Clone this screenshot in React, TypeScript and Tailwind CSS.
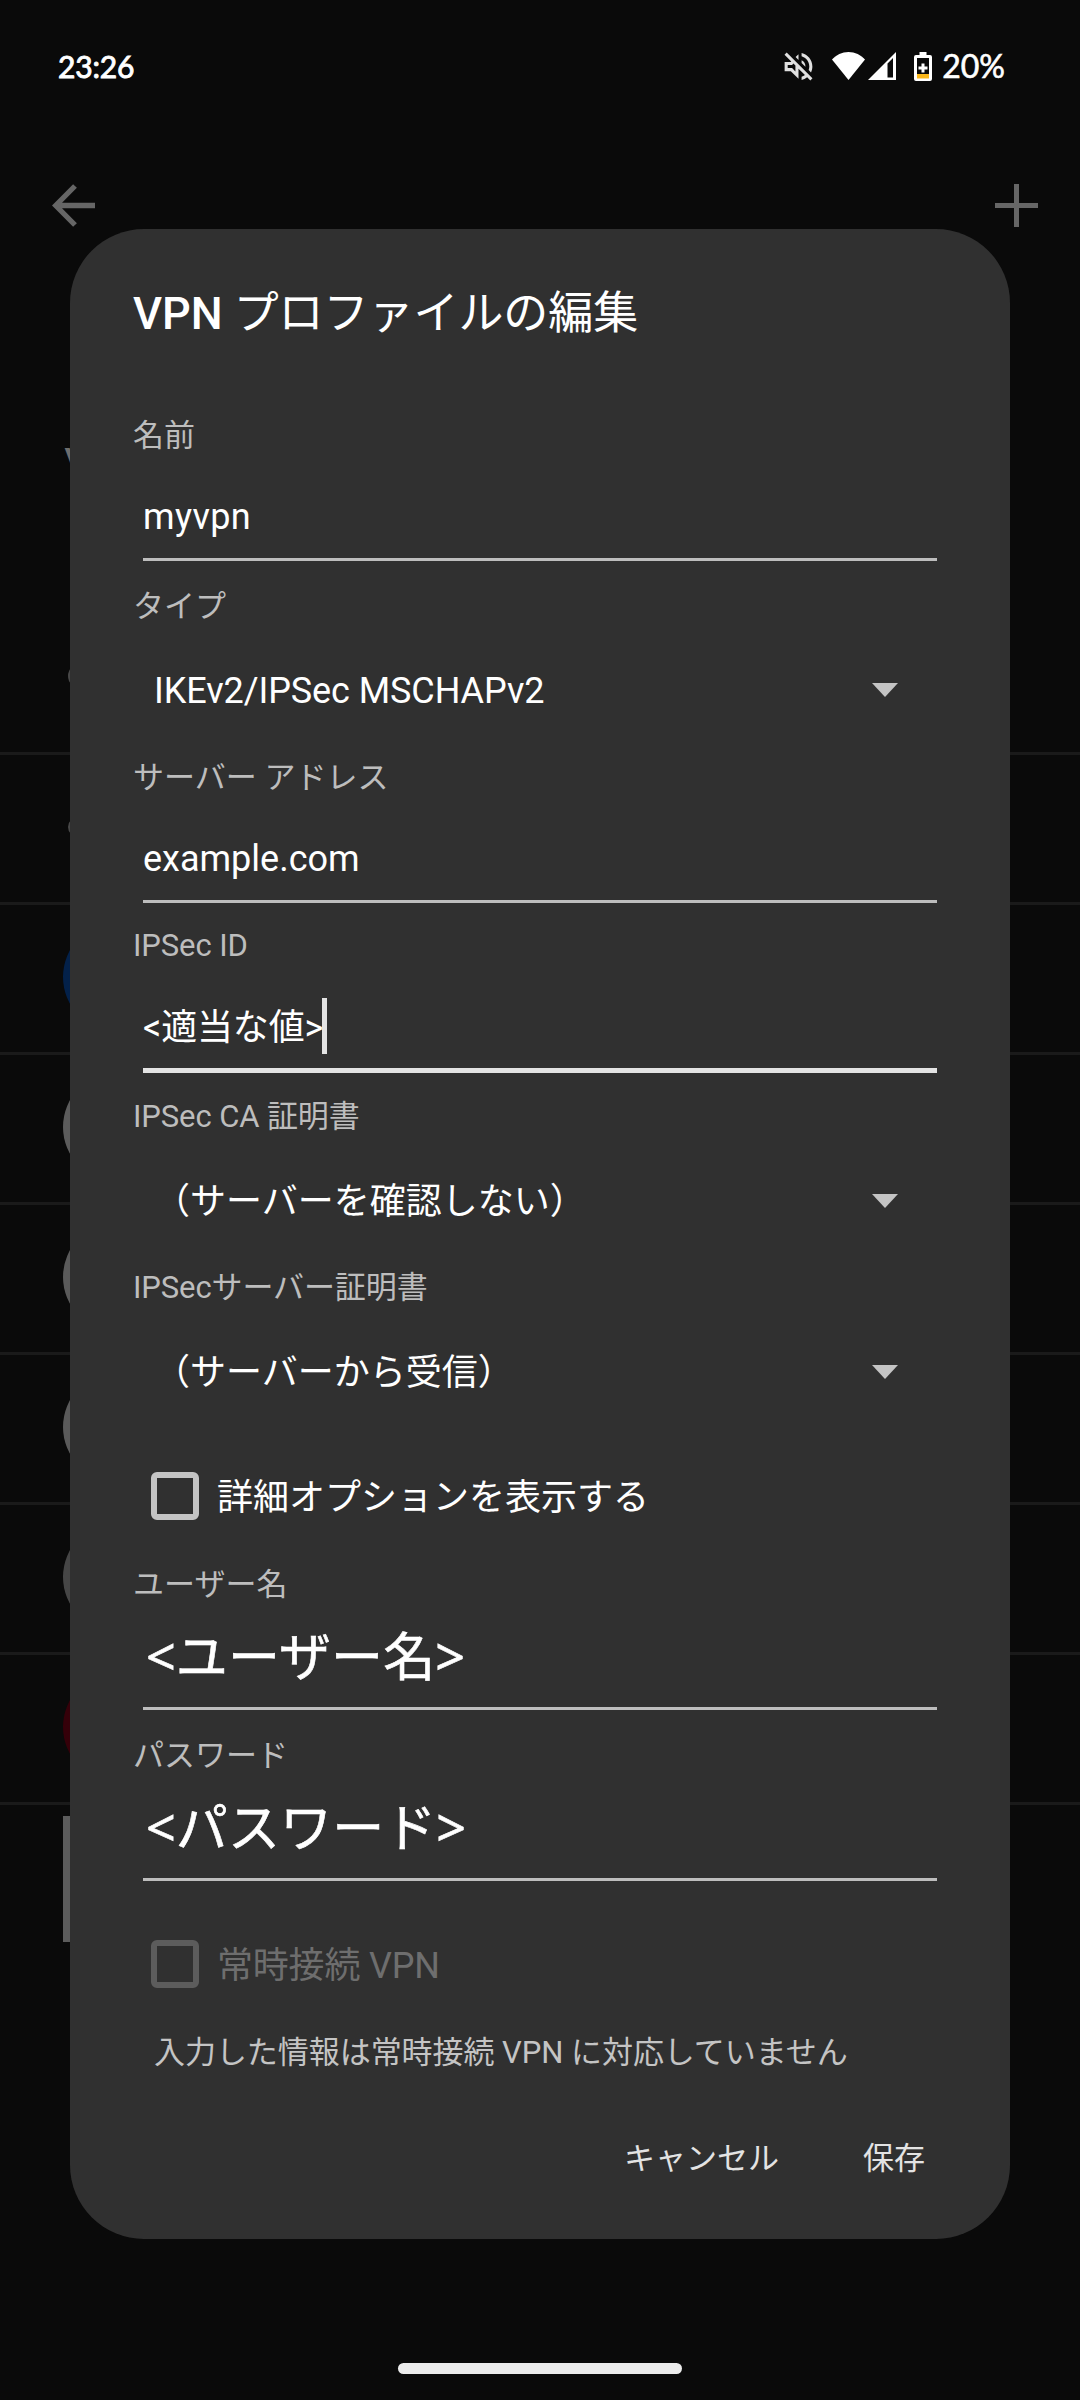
import React from 'react';
import { MdOutlineVolumeOff } from 'react-icons/md';

function StatusBar() {
  return (
    <div className="flex h-[132px] items-center justify-between pl-[58px] pr-[75px] text-white">
      <span className="font-['Lato','Roboto',sans-serif] text-[30px] leading-[40px] tracking-[-0.2px] [-webkit-text-stroke:0.9px]">23:26</span>
      <div className="flex items-center">
        <MdOutlineVolumeOff className="mr-[15px] size-[37px] text-[#e0e0e0]" />
        <svg className="mr-[3px] h-[28px] w-[33px]" viewBox="0 0 33 28">
          <path d="M16.5 28 0 7.5C4 3 10 0 16.500 0S29 3 33 7.500Z" fill="#fff" />
        </svg>
        <svg className="mr-[18px] h-[28px] w-[28px]" viewBox="0 0 28 28">
          <path fillRule="evenodd" d="M0 28 28 0V28ZM19.500 11.500V25.500H25V6Z" fill="#fff" />
        </svg>
        <svg className="mr-[10px] h-[29px] w-[18px]" viewBox="0 0 18 29">
          <path d="M5.500 0h7v3H16q2 0 2 2v22q0 2-2 2H2q-2 0-2-2V5q0-2 2-2h3.500Z" fill="#fff" />
          <path d="M3 6h12v20H3Z" fill="#0a0a0a" />
          <path d="M3 22h12v4.500H3Z" fill="#fbb71a" />
          <path d="M7.500 11.500h3v3h3v3h-3v3h-3v-3h-3v-3h3Z" fill="#fff" />
        </svg>
        <span className="font-['Lato','Roboto',sans-serif] text-[32px] leading-[40px] [-webkit-text-stroke:0.6px]">20%</span>
      </div>
    </div>
  );
}

function AppBar() {
  return (
    <div className="flex h-[145px] items-center justify-between pt-px pl-[52px] pr-[42px] text-[#666]">
      <svg className="size-[43px]" viewBox="0 0 43 43" fill="none" stroke="currentColor" strokeWidth="5.300">
        <path d="M43 21.500H4M23 2 3.700 21.500 23 41" />
      </svg>
      <svg className="size-[43px]" viewBox="0 0 43 43" fill="none" stroke="currentColor" strokeWidth="5">
        <path d="M21.500 0v43M0 21.500h43" />
      </svg>
    </div>
  );
}

const rows = [
  'bg-[#03214a]',
  'bg-[#5c5c5c]',
  'bg-[#5a5a5a]',
  'bg-[#5a5a5a]',
  'bg-[#464646]',
  'bg-[#350009]',
];

function SettingsList() {
  return (
    <div className="flex flex-col">
      <div className="flex h-[478px] flex-col border-b-[3px] border-[#1a1a1a] pt-[159px] pl-[64px]">
        <span className="h-[60px] font-['Roboto',sans-serif] text-[48px] leading-[60px] text-[#6e6e6e]">V</span>
        <span className="mt-[168px] ml-[4px] size-[24px] rounded-full border-[3px] border-[#484848]" />
      </div>
      <div className="flex h-[150px] items-center border-b-[3px] border-[#1a1a1a] pb-[3px] pl-[68px]">
        <span className="size-[20px] rounded-full border-[3px] border-[#484848]" />
      </div>
      {rows.map((color, i) => (
        <div key={i} className="flex h-[150px] items-center border-b-[3px] border-[#1a1a1a] pb-[3px] pl-[63px]">
          <span className={`size-[110px] rounded-full ${color}`} />
        </div>
      ))}
      <div className="pt-[11px] pl-[63px]">
        <div className="size-[126px] bg-[#5c5c5c]" />
      </div>
    </div>
  );
}

function Label({ children, className = '' }: { children: React.ReactNode; className?: string }) {
  return <div className={`ml-[63px] h-[40px] text-[31px] leading-[40px] whitespace-pre text-[#bdbdbd] ${className}`}>{children}</div>;
}

function Field({ children, className = '' }: { children: React.ReactNode; className?: string }) {
  return (
    <div className={`mx-[73px] flex items-start border-b-[3px] border-[#bdbdbd] text-[36px] leading-[48px] text-white ${className}`}>
      {children}
    </div>
  );
}

function Spinner({ children, className = '' }: { children: React.ReactNode; className?: string }) {
  return (
    <div className={`flex h-[131px] items-center justify-between pr-[112px] pb-[4px] pl-[84px] text-[36px] leading-[48px] text-white ${className}`}>
      <span>{children}</span>
      <svg className="mb-[2px] h-[14px] w-[26px]" viewBox="0 0 26 14">
        <path d="M0 0h26L13 14Z" fill="#c4c4c4" />
      </svg>
    </div>
  );
}

function Check({ children, disabled = false, className = '' }: { children: React.ReactNode; disabled?: boolean; className?: string }) {
  return (
    <div className={`ml-[81px] flex h-[48px] items-center gap-[18px] text-[36px] leading-[48px] ${className}`}>
      <span className={`size-[48px] rounded-[6px] border-[6px] ${disabled ? 'border-[#5c5c5c]' : 'border-[#c4c4c4]'}`} />
      <span className={disabled ? 'pt-[3px] tracking-[-0.2px] text-[#6e6e6e]' : 'pt-[3px] text-white'}>{children}</span>
    </div>
  );
}

function Placeholder({ children }: { children: string }) {
  return (
    <span className="ml-[3px] font-['Noto_Sans','Noto_Sans_CJK_JP',sans-serif] text-[52px] leading-[60px] tracking-[0.1px] [-webkit-text-stroke:0.6px]">
      {children}
    </span>
  );
}

function VpnDialog() {
  return (
    <div className="absolute top-[229px] left-[70px] flex h-[2010px] w-[940px] flex-col rounded-[74px] bg-[#303030] pt-[55px] font-['Roboto','Noto_Sans_CJK_JP',sans-serif]">
      <h1 className="ml-[63px] h-[60px] text-[45px] leading-[60px] tracking-[-0.05px] text-white">
        <span className="font-medium">VPN</span> プロファイルの編集
      </h1>
      <Label className="mt-[72px]">名前</Label>
      <Field className="h-[105px] pt-[37px] tracking-[0.4px]">myvpn</Field>
      <Label className="mt-[26px]">タイプ</Label>
      <Spinner className="tracking-[-0.08px]">IKEv2/IPSec MSCHAPv2</Spinner>
      <Label>サーバー アドレス</Label>
      <Field className="h-[105px] pt-[37px]">example.com</Field>
      <Label className="mt-[23px] tracking-[-0.1px]">IPSec ID</Label>
      <div className="mx-[73px] flex h-[107px] items-start border-b-[5px] border-[#e3e3e3] pt-[32px] text-[36px] text-white">
        <span className="mt-[6px] leading-[48px] tracking-[-0.15px]">&lt;適当な値&gt;</span>
        <span className="-ml-px h-[56px] w-[5px] bg-[#e3e3e3]" />
      </div>
      <Label className="mt-[24px] tracking-[-0.1px]">IPSec CA 証明書</Label>
      <Spinner className="pt-[2px]">（サーバーを確認しない）</Spinner>
      <Label className="tracking-[-0.1px]">IPSecサーバー証明書</Label>
      <Spinner className="pt-[2px]">（サーバーから受信）</Spinner>
      <Check className="mt-[33px]">詳細オプションを表示する</Check>
      <Label className="mt-[45px]">ユーザー名</Label>
      <Field className="h-[105px] pt-[21px]"><Placeholder>&lt;ユーザー名&gt;</Placeholder></Field>
      <Label className="mt-[26px]">パスワード</Label>
      <Field className="h-[105px] pt-[21px]"><Placeholder>&lt;パスワード&gt;</Placeholder></Field>
      <Check disabled className="mt-[59px]">常時接続 VPN</Check>
      <div className="mt-[45px] ml-[84px] h-[40px] text-[31px] leading-[40px] tracking-[-0.05px] text-[#c4c4c4]">
        入力した情報は常時接続 VPN に対応していません
      </div>
      <div className="mt-[66px] flex justify-end gap-[84px] pr-[85px] text-[31px] leading-[40px] text-[#e3e3e3]">
        <button>キャンセル</button>
        <button>保存</button>
      </div>
    </div>
  );
}

export default function App() {
  return (
    <div lang="ja" className="relative flex h-[2400px] w-[1080px] flex-col overflow-hidden bg-[#0a0a0a]">
      <StatusBar />
      <AppBar />
      <SettingsList />
      <VpnDialog />
      <div className="mt-auto mb-[26px] h-[11px] w-[284px] self-center rounded-full bg-[#ececec]" />
    </div>
  );
}
